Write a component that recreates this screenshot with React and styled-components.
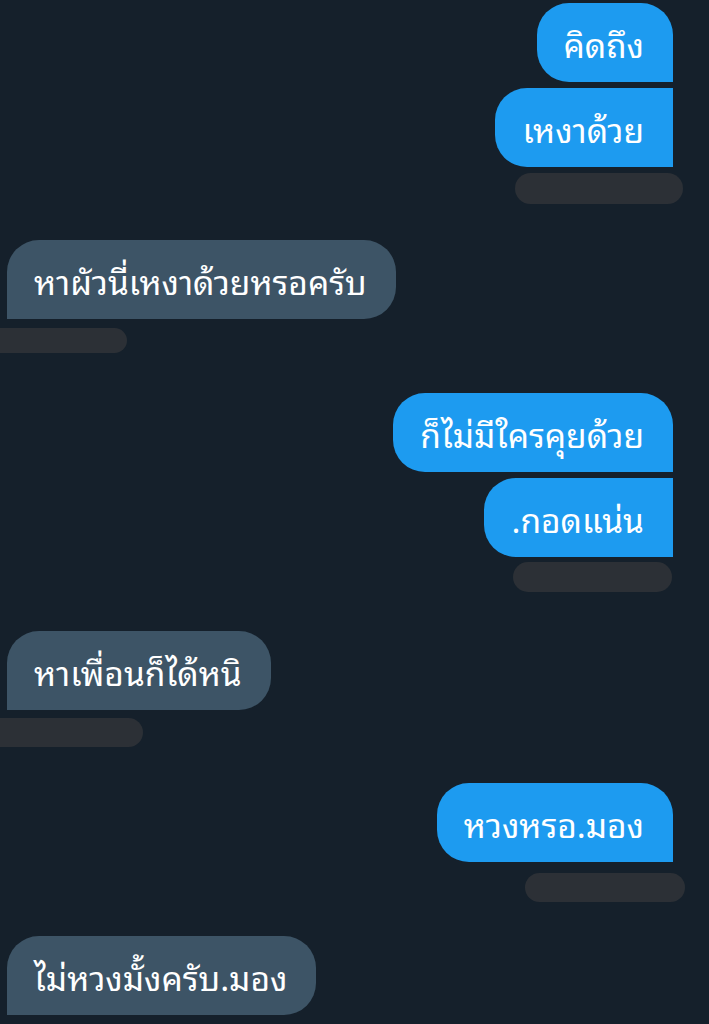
import React from 'react';
import styled, { createGlobalStyle } from 'styled-components';

const GlobalStyle = createGlobalStyle`
  html, body {
    margin: 0;
    padding: 0;
    background-color: #15202b;
  }
  body {
    font-family: "Noto Sans Thai Looped", "Noto Sans Thai", Tahoma, "Noto Sans", "DejaVu Sans", sans-serif;
    -webkit-font-smoothing: antialiased;
  }
`;

const Thread = styled.div`
  width: 709px;
  height: 1024px;
  overflow: hidden;
  background-color: #15202b;
  display: flex;
  flex-direction: column;
  padding-top: 3px;
  box-sizing: border-box;
`;

const Group = styled.div`
  display: flex;
  flex-direction: column;
  align-items: ${props => (props.side === 'right' ? 'flex-end' : 'flex-start')};
  padding: ${props => (props.side === 'right' ? '0 36px 0 0' : '0 0 0 7px')};
  margin-top: ${props => props.gap || 0}px;
  gap: 6px;
`;

const radius = (side, pos) => {
  const r = '32px';
  if (side === 'right') {
    if (pos === 'first') return `${r} ${r} 0 ${r}`;
    if (pos === 'last') return `${r} 0 0 ${r}`;
    return `${r} ${r} 0 ${r}`;
  }
  return `${r} ${r} ${r} 0`;
};

const Bubble = styled.div`
  height: 79px;
  display: flex;
  align-items: center;
  padding: 0 29px 0 27px;
  box-sizing: border-box;
  border-radius: ${props => radius(props.side, props.pos)};
  background-color: ${props => (props.side === 'right' ? '#1d9bf0' : '#3d5466')};
  color: #ffffff;
  font-size: 33.5px;
  white-space: nowrap;
`;

const Redacted = styled.div`
  width: ${props => props.w}px;
  height: ${props => props.h}px;
  border-radius: ${props => props.h / 2}px;
  background-color: #2c3036;
  margin-top: ${props => props.top || 0}px;
  margin-right: ${props => props.mr || 0}px;
  margin-left: ${props => props.ml || 0}px;
`;

const messages = [
  {
    side: 'right',
    gap: 0,
    texts: ['คิดถึง', 'เหงาด้วย'],
    stamp: { w: 168, h: 31, top: 0, mr: -10 },
  },
  {
    side: 'left',
    gap: 36,
    texts: ['หาผัวนี่เหงาด้วยหรอครับ'],
    stamp: { w: 147, h: 25, top: 3, ml: -27 },
  },
  {
    side: 'right',
    gap: 40,
    texts: ['ก็ไม่มีใครคุยด้วย', '.กอดแน่น'],
    stamp: { w: 159, h: 30, top: -1, mr: 1 },
  },
  {
    side: 'left',
    gap: 39,
    texts: ['หาเพื่อนก็ได้หนิ'],
    stamp: { w: 163, h: 29, top: 2, ml: -27 },
  },
  {
    side: 'right',
    gap: 36,
    texts: ['หวงหรอ.มอง'],
    stamp: { w: 160, h: 29, top: 5, mr: -12 },
  },
  {
    side: 'left',
    gap: 34,
    texts: ['ไม่หวงมั้งครับ.มอง'],
  },
];

const App = () => {
  return (
    <>
      <GlobalStyle />
      <Thread>
        {messages.map((m, i) => (
          <Group key={i} side={m.side} gap={m.gap}>
            {m.texts.map((t, j) => (
              <Bubble
                key={j}
                side={m.side}
                pos={m.texts.length === 1 ? 'single' : j === 0 ? 'first' : 'last'}
              >
                {t}
              </Bubble>
            ))}
            {m.stamp && <Redacted {...m.stamp} />}
          </Group>
        ))}
      </Thread>
    </>
  );
};

export default App;
